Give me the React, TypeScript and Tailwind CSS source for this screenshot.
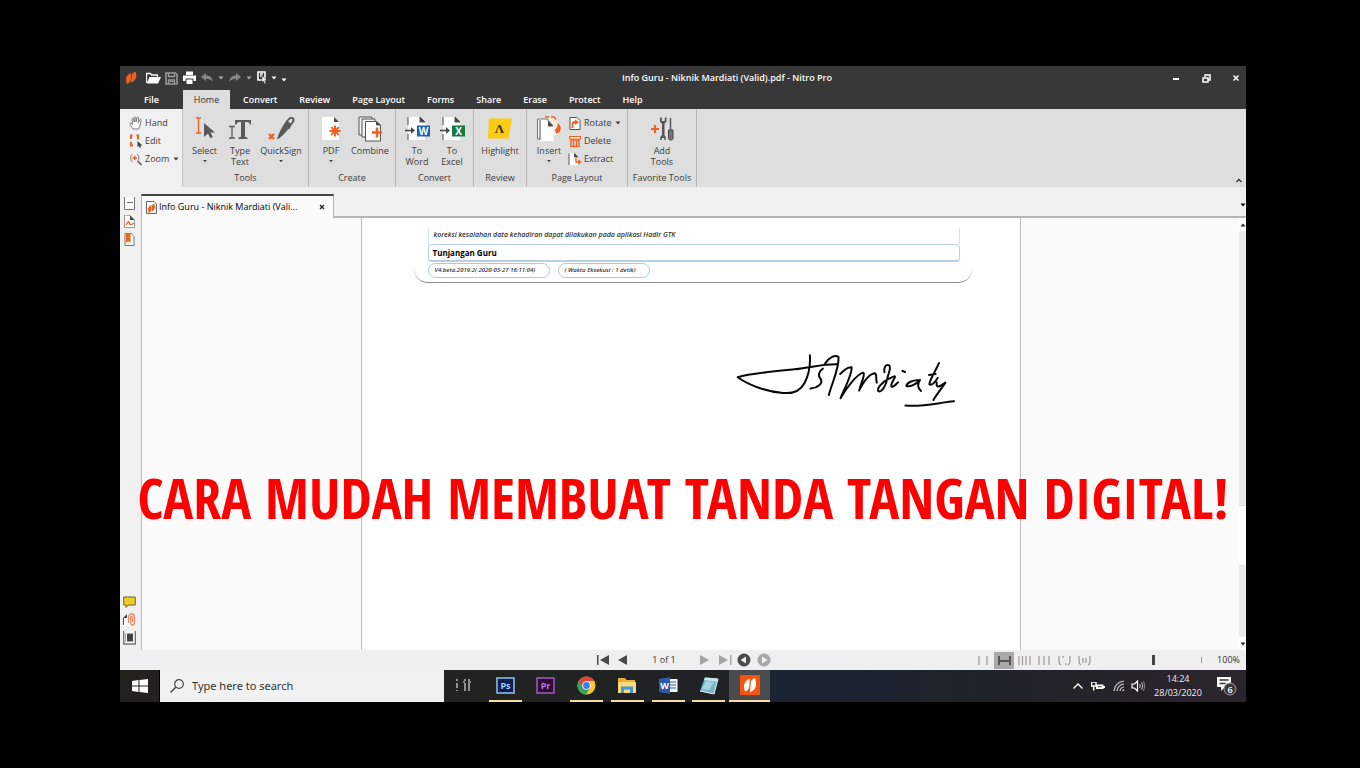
import type { ReactNode } from "react";

type Kids = { children?: ReactNode };

const ORANGE = "#ee6020";
const INK = "#4a4a4a";

function Caret({ className = "" }: { className?: string }) {
  return (
    <svg viewBox="0 0 6 4" className={`h-1 w-1.5 shrink-0 ${className}`} fill="currentColor" aria-hidden="true">
      <path d="M0.5 0.5h5L3 3.6z" />
    </svg>
  );
}

function Icon({ box, className, children }: Kids & { box: string; className: string }) {
  return (
    <svg viewBox={box} className={`shrink-0 ${className}`} fill="none" aria-hidden="true">
      {children}
    </svg>
  );
}

function NitroMark({ className, fill }: { className: string; fill: string }) {
  return (
    <Icon box="0 0 12 14" className={className}>
      <path d="M6.300 2C3 3.200 1 5.400 1 8.200c0 1.600.3 3.200.9 4.800 2.300-.8 3.600-2.200 3.800-4.400z" fill={fill} />
      <path d="M5.800 11.800C9.300 10.300 11.300 8 11.300 5c0-1.600-.2-3-.6-4.300C8.200 1.200 6.900 2.500 6.700 5z" fill={fill} />
    </Icon>
  );
}

function TitleBar() {
  return (
    <header className="flex h-6 shrink-0 items-center bg-[#383838] text-white">
      <div className="flex w-[168px] shrink-0 items-center pl-[5px]">
        <NitroMark className="h-[14px] w-3" fill={ORANGE} />
        <button aria-label="Open" className="ml-[9px]">
          <Icon box="0 0 15 12" className="h-3 w-[15px]">
            <path d="M0.500 11V1.500h4l1 1.500h6V5" stroke="#fff" strokeWidth="1.300" />
            <path d="M3.500 5H15l-3 6.500H0.800z" fill="#fff" />
          </Icon>
        </button>
        <button aria-label="Save" className="ml-1">
          <Icon box="0 0 13 13" className="h-[13px] w-[13px]">
            <path d="M1 1h9.500L12 2.500V12H1z" stroke="#9b9b9b" strokeWidth="1.500" />
            <path d="M3.500 1.500v3h6v-3M3.500 12V8h6v4" stroke="#9b9b9b" strokeWidth="1.300" />
            <path d="M4.500 9.500h4" stroke="#9b9b9b" />
          </Icon>
        </button>
        <button aria-label="Print" className="ml-[5px]">
          <Icon box="0 0 13 14" className="h-[14px] w-[13px]">
            <path d="M3 0.500h7V4H3zM0 4.500h13V10H0z" fill="#fff" />
            <path d="M3 8h7v5.500H3z" fill="#fff" stroke="#383838" />
          </Icon>
        </button>
        <button aria-label="Undo" className="ml-[5px]">
          <Icon box="0 0 12 10" className="h-2.5 w-3">
            <path d="M5 0v2.500c4 0 6.500 2 6.500 6.500C10 6.500 8 5.800 5 5.800V8L0 4z" fill="#858585" />
          </Icon>
        </button>
        <Caret className="ml-[5px] text-[#aaa]" />
        <button aria-label="Redo" className="ml-[5px]">
          <Icon box="0 0 12 10" className="h-2.5 w-3">
            <path d="M7 0v2.500C3 2.500.500 4.500.500 9 2 6.500 4 5.800 7 5.800V8l5-4z" fill="#858585" />
          </Icon>
        </button>
        <Caret className="ml-[5px] text-[#aaa]" />
        <button aria-label="Selection tool" className="ml-[5px]">
          <Icon box="0 0 11 14" className="h-[14px] w-[11px]">
            <path d="M1 1h7v8H1zM3 3h3M3 5h2" stroke="#fff" strokeWidth="1.600" />
            <path d="M5 4.500l5 5H7.800l1.200 3-1.400.6-1.200-3L5 11.500z" fill="#fff" stroke="#222" strokeWidth=".5" />
          </Icon>
        </button>
        <Caret className="ml-[3px]" />
        <Caret className="ml-1 mt-1" />
      </div>
      <h1 className="min-w-0 flex-1 truncate text-center text-[9px] font-semibold leading-3">
        Info Guru - Niknik Mardiati (Valid).pdf - Nitro Pro
      </h1>
      <div className="flex shrink-0 gap-2.5">
        <button aria-label="Minimise" className="grid h-5 w-5 place-items-center">
          <Icon box="0 0 8 8" className="h-2 w-2"><path d="M1 5h6" stroke="#fff" strokeWidth="2" /></Icon>
        </button>
        <button aria-label="Restore" className="grid h-5 w-5 place-items-center">
          <Icon box="0 0 9 9" className="h-[9px] w-[9px]">
            <path d="M3 3V1h5v5H6M1 4h5v4H1z" stroke="#fff" strokeWidth="1.500" />
          </Icon>
        </button>
        <button aria-label="Close" className="grid h-5 w-5 place-items-center">
          <Icon box="0 0 8 8" className="h-2 w-2"><path d="M1.500 1.500l5 5M6.500 1.500l-5 5" stroke="#fff" strokeWidth="1.500" /></Icon>
        </button>
      </div>
    </header>
  );
}

const menus = ["Convert", "Review", "Page Layout", "Forms", "Share", "Erase", "Protect", "Help"];

function MenuBar() {
  return (
    <nav className="flex h-[19px] shrink-0 bg-[#383838] text-[9px] font-semibold leading-5 text-white">
      <button className="w-[63px]">File</button>
      <button className="w-[47px] bg-[#dedede] font-normal text-[#333]">Home</button>
      <div className="flex px-0.5">
        {menus.map((m) => (
          <button key={m} className="px-[11px]">{m}</button>
        ))}
      </div>
    </nav>
  );
}

function Group({ name, width, children }: Kids & { name: string; width: string }) {
  return (
    <section aria-label={name} className={`flex shrink-0 flex-col border-r border-[#b4b4b4] ${width}`}>
      <div className="flex flex-1 justify-center pt-1.5">{children}</div>
      <p className="whitespace-nowrap pb-[3px] text-center leading-3">{name}</p>
    </section>
  );
}

function Tool({ lines, icon, width, caret }: { lines: string[]; icon: ReactNode; width: string; caret?: boolean }) {
  return (
    <button className={`flex shrink-0 flex-col items-center leading-[11px] ${width}`}>
      <span className="mb-[3px] grid h-[27px] place-items-center">{icon}</span>
      {lines.map((l) => (
        <span key={l} className="whitespace-nowrap">{l}</span>
      ))}
      {caret && <Caret className="mt-[3px] scale-75" />}
    </button>
  );
}

function SmallTool({ icon, label, caret }: { icon: ReactNode; label: string; caret?: boolean }) {
  return (
    <button className="flex h-[18px] items-center gap-0.5">
      <span className="grid w-[15px] place-items-center">{icon}</span>
      <span>{label}</span>
      {caret && <Caret className="ml-0.5" />}
    </button>
  );
}

const pagePath = "M1 1h12l5 5v18H1z";

const SelectIcon = (
  <Icon box="0 0 20 24" className="h-6 w-5">
    <path d="M1 1h5M3.500 1v15M1 16h5" stroke={ORANGE} strokeWidth="1.300" />
    <path d="M9 6l11 9.500h-4.500l2.300 4.500-2.500 1.200-2.300-4.700L9 20z" fill="#595959" />
  </Icon>
);
const TypeIcon = (
  <Icon box="0 0 22 24" className="h-6 w-[22px]">
    <path d="M6 3h16v4.500h-1.200C20.500 5.500 19.500 5 16 5v14c0 1 .5 1.300 2.500 1.500V22h-9v-1.500c2-.2 2.500-.5 2.500-1.500V5C9 5 8 5.500 7.500 7.500H6z" fill="#595959" />
    <path d="M0 9.500h6M3 9.500V21M0 21h6" stroke="#595959" strokeWidth="1.300" />
  </Icon>
);
const SignIcon = (
  <Icon box="0 0 28 24" className="h-6 w-7">
    <path d="M2 17l5 5M7 17l-5 5" stroke={ORANGE} strokeWidth="2.300" />
    <path d="M10 22.500c1-5 4.500-12 9.500-19l5 3.500C20.500 14 15 20 10 22.500z" fill="#595959" />
    <path d="M20 4.500c2-3.500 4.500-4.500 6-3s.5 3-2 6M24 7l-2.500 5" stroke="#595959" strokeWidth="1.800" />
  </Icon>
);
const PdfIcon = (
  <Icon box="0 0 21 25" className="h-[25px] w-[21px]">
    <path d={pagePath} fill="#fff" />
    <path d="M13 1l5 5h-5z" fill={INK} />
    <path d="M14 9.500v11M8.500 15h11M10.200 11.200l7.600 7.600M17.800 11.200l-7.600 7.600" stroke={ORANGE} strokeWidth="1.900" />
  </Icon>
);
const CombineIcon = (
  <Icon box="0 0 25 26" className="h-[26px] w-[25px]">
    <path d="M1 1h13v18H1z" fill="#f2f2f2" stroke="#555" />
    <path d="M4 3h13v18H4z" fill="#f2f2f2" stroke="#555" />
    <path d="M7.500 5.500h11L22.500 9v16h-15z" fill="#fff" stroke="#555" />
    <path d="M18.500 5.500V9h4" fill={INK} stroke={INK} />
    <path d="M19 11.500v10M14 16.500h10" stroke={ORANGE} strokeWidth="2.600" />
  </Icon>
);

function ExportIcon({ letter, fill }: { letter: string; fill: string }) {
  return (
    <Icon box="0 0 25 25" className="h-[25px] w-[25px]">
      <path d="M3 1h12l5 5v18H3z" fill="#fff" />
      <path d="M3 1v8M3 18v6M15 1l5 5h-5z" stroke={INK} fill={INK} />
      <path d="M0 14.500h7" stroke={INK} strokeWidth="1.600" />
      <path d="M6 11l4 3.500L6 18z" fill={INK} />
      <path d="M12 9.500h13v11H12z" fill={fill} />
      <text x="18.500" y="18.500" textAnchor="middle" fontSize="10" fontWeight="700" fill="#fff">{letter}</text>
    </Icon>
  );
}

const HighlightIcon = (
  <Icon box="0 0 24 21" className="h-[21px] w-6">
    <path d="M1 0.500h23l-3.500 20H0z" fill="#fccc12" />
    <text x="11.500" y="15" textAnchor="middle" fontSize="13" fontFamily="Liberation Serif, serif" fontWeight="700" fill="#3a3000">Λ</text>
  </Icon>
);
const InsertIcon = (
  <Icon box="0 0 26 26" className="h-[26px] w-[26px]">
    <path d="M9 1h9l4 4v14H9z" fill="#f7e8dd" />
    <path d="M9 1h4M15 1h3l2 2.500" stroke={ORANGE} strokeWidth="1.600" />
    <path d="M1.500 3H12v20H1.500z" fill="#fff" stroke="#777" />
    <path d="M4 5h9l4.500 4.500V25H4z" fill="#fff" />
    <path d="M4 4v20M12.500 5v5H17z" fill={INK} stroke={INK} />
    <path d="M22 7l3 4.500-1 4-3.500 2.500-1.500-4 2-2.500z" fill={ORANGE} />
  </Icon>
);
const AddToolsIcon = (
  <Icon box="0 0 23 26" className="h-[26px] w-[23px]">
    <path d="M4 9v8M0 13h8" stroke={ORANGE} strokeWidth="2.200" />
    <path d="M9 1.500v4.200l2 2V19l-1.800 2v3h1.500v-2h2.600v2h1.500v-3L13.500 19V7.700l2-2V1.500h-1.700V5h-3V1.500z" fill="#555" />
    <path d="M19.500 2v12" stroke="#555" strokeWidth="1.500" />
    <path d="M17.500 14h4.500v8.500c0 2-4.500 2-4.500 0z" fill="#777" stroke="#444" />
  </Icon>
);

function Ribbon() {
  return (
    <div className="flex h-[78px] shrink-0 bg-[#dedede] text-[9px] text-[#3c3c3c]">
      <div className="flex w-[63px] shrink-0 flex-col border-r border-[#c4c4c4] bg-[#f0f0f0] pl-2 pt-[5px]">
        <SmallTool label="Hand" icon={
          <Icon box="0 0 14 14" className="h-3.5 w-3.5">
            <path d="M4 13C2.500 10.500 1 9 1 7.500c.8-.9 1.600-.2 2.500 1L3 3.200C3 2 4.500 2 4.700 3.200L5.200 6 5.300 1.700c.1-1.200 1.600-1.200 1.700 0V6L8 2c.2-1.200 1.700-1 1.600.300L9.300 6.500l1.500-2.800c.7-.9 1.900-.2 1.500.8C11 7.500 11.500 10.500 9.500 13z" fill="#fff" stroke="#777" />
          </Icon>} />
        <SmallTool label="Edit" icon={
          <Icon box="0 0 14 14" className="h-3.5 w-3.5">
            <path d="M1 1.500h2.500M2 1.500v3.500M2 8v3.500M1 11.500h3M7.500 1.500H10M9 1.500v4" stroke={ORANGE} strokeWidth="2" />
            <path d="M8.500 7l5 4.500h-2.200l1 2H10.500l-.7-1.500-1.300 1z" fill="#444" />
          </Icon>} />
        <SmallTool label="Zoom" caret icon={
          <Icon box="0 0 14 14" className="h-3.5 w-3.5">
            <path d="M3.500 2C1 4 1 8 3.500 10M8 2c2.500 2 2.500 6 0 8" stroke="#777" />
            <path d="M9 9.500l3.500 3.500" stroke="#555" strokeWidth="1.600" />
            <path d="M5.700 3.800v4.400M3.500 6h4.400" stroke={ORANGE} strokeWidth="1.400" />
          </Icon>} />
      </div>
      <div className="flex min-w-0 flex-1">
        <Group name="Tools" width="w-[126px]">
          <Tool width="w-[36px]" lines={["Select"]} icon={SelectIcon} caret />
          <Tool width="w-[35px]" lines={["Type", "Text"]} icon={TypeIcon} />
          <Tool width="w-[47px]" lines={["QuickSign"]} icon={SignIcon} caret />
        </Group>
        <Group name="Create" width="w-[87px]">
          <Tool width="w-[36px]" lines={["PDF"]} icon={PdfIcon} caret />
          <Tool width="w-[42px]" lines={["Combine"]} icon={CombineIcon} />
        </Group>
        <Group name="Convert" width="w-[78px]">
          <Tool width="w-[35px]" lines={["To", "Word"]} icon={<ExportIcon letter="W" fill="#1d5fb0" />} />
          <Tool width="w-[35px]" lines={["To", "Excel"]} icon={<ExportIcon letter="X" fill="#157a48" />} />
        </Group>
        <Group name="Review" width="w-[53px]">
          <Tool width="w-[46px]" lines={["Highlight"]} icon={HighlightIcon} />
        </Group>
        <Group name="Page Layout" width="w-[101px]">
          <Tool width="w-[36px]" lines={["Insert"]} icon={InsertIcon} caret />
          <div className="-mt-px flex w-[56px] flex-col">
            <SmallTool label="Rotate" caret icon={
              <Icon box="0 0 12 13" className="h-[13px] w-3">
                <path d="M1 12.500V.500h7l3 3v9z" fill="#fff" stroke="#555" />
                <path d="M3.500 11V7.500c0-2 1-2.500 3-2.500" stroke={ORANGE} strokeWidth="1.800" />
                <path d="M6 2.500l4 2.700L6 8z" fill={ORANGE} />
              </Icon>} />
            <SmallTool label="Delete" icon={
              <Icon box="0 0 12 12" className="h-3 w-3">
                <path d="M.500 1.500h11v2.500H.500z" fill="#fff" stroke={ORANGE} strokeWidth="1.200" />
                <path d="M2 5h8v6.500H2zM4.500 6v5M7.500 6v5" stroke={ORANGE} strokeWidth="1.400" />
              </Icon>} />
            <SmallTool label="Extract" icon={
              <Icon box="0 0 14 12" className="h-3 w-3.5">
                <path d="M1 .500h6l3 3V12H1z" fill="#fff" />
                <path d="M1 .500V12M6.500 .500V4H10z" fill="#444" stroke="#555" />
                <path d="M8 5v4h4M10.500 7l2 2-2 2" stroke={ORANGE} strokeWidth="1.400" />
              </Icon>} />
          </div>
        </Group>
        <Group name="Favorite Tools" width="w-[69px]">
          <Tool width="w-[40px]" lines={["Add", "Tools"]} icon={AddToolsIcon} />
        </Group>
        <button aria-label="Collapse ribbon" className="ml-auto mr-1 self-end pb-1">
          <Icon box="0 0 6 5" className="h-[5px] w-1.5"><path d="M.500 4L3 1.500 5.500 4" stroke="#333" strokeWidth="1.300" /></Icon>
        </button>
      </div>
    </div>
  );
}

function SideRail() {
  return (
    <aside className="flex w-[21px] shrink-0 flex-col items-center gap-[5px] bg-[#f0f0f0] pb-[5px] pr-[3px] pt-2.5">
      <button aria-label="Pages">
        <Icon box="0 0 11 13" className="h-[13px] w-[11px]">
          <path d="M.500 0v12.500h10V0" fill="#fff" stroke="#777" /><path d="M3 5.500h6" stroke="#666" />
        </Icon>
      </button>
      <button aria-label="Signatures">
        <Icon box="0 0 11 13" className="h-[13px] w-[11px]">
          <path d="M.500 0v12.500h10V5L6 .500z" fill="#fff" stroke="#999" />
          <path d="M6 .500V5h4.500z" fill="#444" /><path d="M2 10c2-4 3-4 3.500-1.500S8 9 10 8" stroke={ORANGE} strokeWidth="1.300" />
        </Icon>
      </button>
      <button aria-label="Bookmarks">
        <Icon box="0 0 11 13" className="h-[13px] w-[11px]">
          <path d="M1 .500h6.500l2.500 3v9H1z" fill="#fff" stroke="#777" /><path d="M2 0h4.500v10L4.200 8 2 10z" fill="#ec6a10" />
        </Icon>
      </button>
      <button aria-label="Comments" className="mt-auto">
        <Icon box="0 0 13 12" className="h-3 w-[13px]">
          <path d="M.700 1h11.600v8H5l-2 2.500V9H.700z" fill="#f0cb28" stroke="#776522" />
        </Icon>
      </button>
      <button aria-label="Attachments">
        <Icon box="0 0 14 13" className="h-[13px] w-3.5">
          <path d="M1 13V5l4-4h3v12z" fill="#fff" /><path d="M1 12V5l4-4v4H2v7z" fill="#444" />
          <path d="M6.500 10V4c0-4 6-4 6 0v5c0 4-4 4-4 0V4.500c0-1.500 2-1.500 2 0V9" stroke="#e88c68" strokeWidth="1.300" />
        </Icon>
      </button>
      <button aria-label="Layers">
        <Icon box="0 0 13 14" className="h-3.5 w-[13px]">
          <path d="M.700 0v13h11.600V0" fill="#fff" stroke="#777" strokeWidth="1.400" /><path d="M4 2.500h6v8H4z" fill="#444" /><path d="M2.500 2v9" stroke="#aaa" />
        </Icon>
      </button>
    </aside>
  );
}

function Signature() {
  return (
    <svg viewBox="40 400 670 170" className="ml-auto mr-[63px] mt-[70px] w-[223px]" fill="none" stroke="#080808" strokeWidth="6" strokeLinecap="round" strokeLinejoin="round" role="img" aria-label="Signature">
      <path d="M349 434C308 433 276 443 222 449C150 456 92 461 51 473C88 499 142 517 187 520C218 523 241 511 252 490C265 465 270 439 268 407" />
      <path d="M307 447C295 455 291 468 300 477C309 492 291 505 270 507" />
      <path d="M314 431C327 412 344 405 354 412C356 447 335 488 325 526" />
      <path d="M359 463C371 451 384 441 393 443C397 460 372 507 360 536C379 502 411 462 429 459C435 466 421 491 416 513C426 493 445 463 463 461C471 463 465 478 469 489" />
      <path d="M492 458C489 444 496 433 506 437C514 445 503 462 501 475C498 495 485 518 475 515C465 509 488 485 506 477C521 470 527 466 522 476C515 488 509 499 515 502C521 502 526 494 533 488M546 454L554 457" />
      <path d="M595 482C578 480 559 490 558 499C569 503 586 495 599 481C592 491 590 503 602 514" />
      <path d="M656 430C647 453 629 476 627 494C634 500 646 485 652 475M626 466L646 463M649 489C647 508 658 501 675 489C665 505 651 522 639 541" />
      <path d="M555 558C611 563 653 549 701 545" />
    </svg>
  );
}

function Document() {
  return (
    <article className="w-[660px] shrink-0 border-x border-[#bebebe] bg-white pt-2.5 text-[#333]">
      <div className="ml-[52px] w-[558px] rounded-b-[14px] border-b border-[#8a8a8a] pb-1 pl-[14px] pr-3">
        <p className="h-4 border-x border-[#cfe0ea] px-[5px] text-[7px] font-semibold italic leading-[14px]">
          koreksi kesalahan data kehadiran dapat dilakukan pada aplikasi Hadir GTK
        </p>
        <h2 className="h-[18px] rounded-sm border border-b-2 border-[#b7d0e0] px-1 text-[8px] font-bold leading-[15px] text-black">Tunjangan Guru</h2>
        <div className="flex gap-2 pt-px text-[6px] font-semibold italic">
          <span className="h-[15px] w-[122px] whitespace-nowrap rounded-full border border-[#a9ccda] px-1.5 leading-[13px]">V4.beta.2019.2( 2020-03-27 16:11:04)</span>
          <span className="h-[15px] w-[92px] whitespace-nowrap rounded-full border border-[#a9ccda] px-1.5 leading-[13px]">( Waktu Eksekusi : 1 detik)</span>
        </div>
      </div>
      <Signature />
    </article>
  );
}

function Workspace() {
  return (
    <div className="flex min-h-0 flex-1">
      <SideRail />
      <div className="flex min-w-0 flex-1 flex-col">
        <div className="flex h-[31px] shrink-0 items-end bg-[#f0f0f0]">
          <div className="flex h-6 w-[193px] shrink-0 items-center border-x border-t-2 border-x-[#b4b4b4] border-t-[#444] bg-[#fafafa] pl-1 text-[9px] font-medium text-black">
            <Icon box="0 0 11 13" className="h-[13px] w-[11px]">
              <path d="M.500.500H8L10.500 3v9.500H.500z" fill="#fff" stroke="#666" />
              <path d="M5.500 4C3 5 2 6.500 2 8.500L2.500 12C4.300 11.500 5 10.500 5.200 9zM5.500 10.500C8 9.500 9 8 9 6l-.5-3.500C6.600 3 6 4 5.800 6z" fill={ORANGE} />
            </Icon>
            <span className="ml-0.5 flex-1 truncate">Info Guru - Niknik Mardiati (Vali...</span>
            <button aria-label="Close document" className="mr-2 grid place-items-center">
              <Icon box="0 0 6 6" className="h-1.5 w-1.5"><path d="M1 1l4 4M5 1L1 5" stroke="#222" strokeWidth="1.300" /></Icon>
            </button>
          </div>
          <div className="flex h-full flex-1 items-center justify-end border-b-2 border-[#b4b4b4] pt-1.5">
            <Caret className="text-black" />
          </div>
        </div>
        <div className="flex min-h-0 flex-1">
          <div className="flex min-w-0 flex-1 justify-center border-l border-[#b9b9b9] bg-[#fafafa]">
            <Document />
          </div>
          <div className="flex w-[7px] shrink-0 flex-col bg-[#ebebeb]">
            <span className="grid h-[13px] place-items-center bg-white"><Caret className="rotate-180 text-[#222]" /></span>
            <span className="flex-[274]" />
            <span className="h-[61px] border-y border-[#ddd] bg-white" />
            <span className="flex-[71]" />
            <span className="grid h-[13px] place-items-center bg-white"><Caret className="text-[#222]" /></span>
          </div>
        </div>
      </div>
    </div>
  );
}

function NavButton({ label, d, fill, className = "" }: { label: string; d: string; fill: string; className?: string }) {
  return (
    <button aria-label={label} className={className}>
      <Icon box="0 0 14 14" className="h-3.5 w-3.5">
        <path d={d} fill={fill} fillRule="evenodd" />
      </Icon>
    </button>
  );
}

const viewModes = [
  { label: "Single page", d: "M1 1v9M9 1v9" },
  { label: "Fit width", d: "M3 1v9M14 1v9M3 6h11" },
  { label: "Facing pages", d: "M1 1v9M4.500 1v9M8 1v9M12 1v9" },
  { label: "Continuous facing", d: "M1 1v9M6 1v9M11 1v9" },
  { label: "Rotate left", d: "M1 1v5q0 3 2 4M5 1v2M8 8v2M12 1v5q0 3-2 4" },
  { label: "Rotate right", d: "M1 1v5q0 3 2 4M5 3v5M8 3v5M12 1v5q0 3-2 4" },
];

function StatusBar() {
  return (
    <footer className="flex h-5 shrink-0 items-center bg-[#efefef] text-[9px] text-[#333]">
      <div className="flex flex-1 items-center pl-[476px]">
        <NavButton label="First page" fill={INK} d="M1 2h1.500v10H1zM13 2v10L4 7z" />
        <NavButton label="Previous page" fill={INK} className="ml-[5px]" d="M12 2v10L3 7z" />
        <span className="w-[70px] text-center">1 of 1</span>
        <NavButton label="Next page" fill="#a3a3a3" className="mr-[5px]" d="M1 2v10l9-5z" />
        <NavButton label="Last page" fill="#a3a3a3" className="mr-[5px]" d="M1 2v10l9-5zM12 2h1.500v10H12z" />
        <NavButton label="Back" fill="#4a4a4a" className="mr-[6px]" d="M7 .500a6.500 6.500 0 1 0 0 13a6.500 6.500 0 1 0 0-13zM9 3.500v7L3.500 7z" />
        <NavButton label="Forward" fill="#a8a8a8" d="M7 .500a6.500 6.500 0 1 0 0 13a6.500 6.500 0 1 0 0-13zM5 3.500v7L10.500 7z" />
      </div>
      <div className="flex items-center">
        {viewModes.map((v, i) => (
          <button key={v.label} aria-label={v.label} className={i === 1 ? "grid h-[17px] w-5 place-items-center bg-[#a9a9a9]" : "grid h-[17px] w-5 place-items-center"}>
            <Icon box={i === 1 ? "0 0 17 11" : "0 0 13 11"} className={i === 1 ? "h-[11px] w-[17px]" : "h-[11px] w-[13px]"}>
              <path d={v.d} stroke={i === 1 ? "#555" : "#999"} strokeWidth={i === 1 ? 2 : 1.2} />
            </Icon>
          </button>
        ))}
      </div>
      <input
        type="range"
        aria-label="Zoom level"
        defaultValue={50}
        className="ml-[9px] h-3 w-[100px] appearance-none bg-transparent [&::-webkit-slider-thumb]:h-2.5 [&::-webkit-slider-thumb]:w-[3px] [&::-webkit-slider-thumb]:appearance-none [&::-webkit-slider-thumb]:bg-[#444]"
      />
      <span className="ml-[-2px] h-1.5 w-px bg-[#999]" />
      <output className="w-11 pr-1.5 text-right">100%</output>
    </footer>
  );
}

function AppTile({ fill, edge, text, label }: { fill: string; edge: string; text: string; label: string }) {
  return (
    <Icon box="0 0 19 17" className="h-[17px] w-[19px]">
      <path d="M1 1h17v15H1z" fill={fill} stroke={edge} strokeWidth="1.500" />
      <text x="9.500" y="12" textAnchor="middle" fontSize="9" fontWeight="700" fill={text}>{label}</text>
    </Icon>
  );
}

const apps: { name: string; open: boolean; icon: ReactNode }[] = [
  { name: "Task view", open: false, icon: (
    <Icon box="0 0 16 14" className="h-3.5 w-4">
      <path d="M1 1v2M1 5v5M1 12v1M9 1v2M9 5v8M13 1v2M13 5v8M7 4h2M12 4h3" stroke="#ddd" strokeWidth="1.200" />
    </Icon>) },
  { name: "Photoshop", open: true, icon: <AppTile fill="#101d4e" edge="#8fc4f3" text="#a5d3fa" label="Ps" /> },
  { name: "Premiere", open: false, icon: <AppTile fill="#2b0d38" edge="#a65bb8" text="#c377d4" label="Pr" /> },
  { name: "Chrome", open: true, icon: (
    <Icon box="0 0 20 20" className="h-[19px] w-[19px]">
      <circle cx="10" cy="10" r="9.500" fill="#f5c631" />
      <path d="M10 10L1.800 5.250A9.500 9.500 0 0 0 9.500 19.500L14 12z" fill="#39a354" />
      <path d="M1.800 5.250A9.500 9.500 0 0 1 18.230 5.300H10V10H4.500z" fill="#e0453a" />
      <circle cx="10" cy="10" r="4.600" fill="#fff" /><circle cx="10" cy="10" r="3.600" fill="#3d7be8" />
    </Icon>) },
  { name: "File Explorer", open: true, icon: (
    <Icon box="0 0 20 17" className="h-[17px] w-5">
      <path d="M1 1h7l1.500 2H18v13H1z" fill="#e9ae32" /><path d="M1 5h18v11H1z" fill="#fbd976" />
      <path d="M4 16V9.500h12V16h-3v-3.500H7V16z" fill="#3e9bd2" />
    </Icon>) },
  { name: "Word", open: true, icon: (
    <Icon box="0 0 20 17" className="h-[17px] w-5">
      <path d="M10 2h9.500v13H10z" fill="#f5f8ff" /><path d="M12 5h6M12 8h6M12 11h6" stroke="#2b579a" />
      <path d="M1 2l11-2v17L1 15z" fill="#2a5caa" />
      <text x="6.500" y="12" textAnchor="middle" fontSize="9" fontWeight="700" fill="#fff">W</text>
    </Icon>) },
  { name: "Notepad", open: true, icon: (
    <Icon box="0 0 20 19" className="h-[19px] w-5">
      <path d="M6 1.500l13 1-4 15.500-14-3z" fill="#78b5c5" /><path d="M6 1.500l13 1-1 3-13-1.500z" fill="#c9e8ee" />
      <path d="M7 5l8 1-5 8-7-1z" fill="#a6d5df" /><path d="M1 15l14 3 4-15" stroke="#e8f4f6" />
    </Icon>) },
  { name: "Nitro Pro", open: true, icon: (
    <Icon box="0 0 20 20" className="h-5 w-5">
      <path d="M0 0h20v20H0z" fill="#f7520e" />
      <path d="M9.800 3.500C5.800 5.500 4 8 4 11c0 2 .3 3.800 1 5.500 2.800-1 4.200-2.800 4.300-5.300zM10 17.500c4.200-2 6-4.700 6-8 0-2.500-.3-4.500-1-6.500-3 1-4.300 2.700-4.300 5.500z" fill="#fff" />
    </Icon>) },
];

function Taskbar() {
  return (
    <div className="flex h-8 shrink-0 bg-linear-to-r from-[#25241c] via-[#1f2126] via-65% to-[#2b232c] text-[#eee]">
      <button aria-label="Start" className="grid w-[39px] shrink-0 place-items-center bg-[#22211e]">
        <Icon box="0 0 16 14" className="h-3.5 w-4">
          <path d="M0 2l6.500-1v5.500H0zM7.500.900L16 0v6.500H7.500zM0 7.500h6.500V13L0 12zM7.500 7.500H16V14l-8.500-1z" fill="#fff" />
        </Icon>
      </button>
      <label className="flex w-[285px] shrink-0 items-center gap-2 border-l border-black bg-[#f1f1f1] pl-2.5">
        <Icon box="0 0 14 14" className="h-3.5 w-3.5">
          <circle cx="9" cy="5" r="4.300" stroke="#444" strokeWidth="1.200" /><path d="M6 8l-5.500 5.500" stroke="#444" strokeWidth="1.400" />
        </Icon>
        <input aria-label="Search" placeholder="Type here to search" className="min-w-0 flex-1 bg-transparent font-['Noto_Sans',sans-serif] text-[11px] outline-none placeholder:text-[#333]" />
      </label>
      <div className="grid w-[326px] shrink-0 grid-cols-8">
        {apps.map((a) => (
          <button key={a.name} aria-label={a.name} className={a.name === "Nitro Pro" ? "flex flex-col items-center bg-[#4a4b4f]" : "flex flex-col items-center"}>
            <span className="grid flex-1 place-items-center">{a.icon}</span>
            <span className={a.name === "Nitro Pro" ? "h-0.5 w-full bg-[#f5df9c]" : a.open ? "h-0.5 w-[33px] bg-[#f5df9c]" : "h-0.5"} />
          </button>
        ))}
      </div>
      <div className="flex flex-1 items-center justify-end bg-linear-to-r from-[#1b2433] via-[#20232a] to-[#2c242d] pr-2">
        <Icon box="0 0 10 6" className="h-1.5 w-2.5"><path d="M.500 5.500L5 1l4.500 4.500" stroke="#fff" strokeWidth="1.300" /></Icon>
        <Icon box="0 0 14 9" className="ml-2 h-[9px] w-3.5">
          <path d="M.500 0h4.500v4H.500z" stroke="#fff" strokeWidth="1.400" /><path d="M5 2.500h7.500V7H5zM12.500 4H14v2h-1.500z" fill="#fff" /><path d="M2.700 4v4.500" stroke="#fff" strokeWidth="1.500" /><path d="M7 4.700h3.500" stroke="#333" />
        </Icon>
        <Icon box="0 0 12 12" className="ml-2 h-3 w-3">
          <path d="M1 11C1.500 5.500 5 2 11 1M4 11c.5-4 3-6.500 7-7M7 11c.3-2.200 1.500-3.700 4-4M9.500 11l1.500-1.500" stroke="#ccc" strokeWidth="1.200" />
        </Icon>
        <Icon box="0 0 14 12" className="ml-1.5 h-3 w-3.5">
          <path d="M1 4h2.500L6.500 1v10l-3-3H1z" stroke="#fff" strokeWidth="1.200" />
          <path d="M8.500 4q1.500 2 0 4M10.500 2.500q2.500 3.500 0 7" stroke="#ccc" /><path d="M12.500 1q2.500 5 0 10" stroke="#888" />
        </Icon>
        <div className="ml-[7px] w-[52px] text-center text-[9px] leading-[14px]">
          <p>14:24</p>
          <p>28/03/2020</p>
        </div>
        <button aria-label="Notifications, 6 new" className="ml-3">
          <Icon box="0 0 22 20" className="h-5 w-[22px]">
            <path d="M1 1h14v10H9l-4 4v-4H1z" fill="#fff" /><path d="M3.500 4h9M3.500 7.500h6" stroke="#333" strokeWidth="1.300" />
            <circle cx="14" cy="13" r="6" fill="#3a3a3d" stroke="#a0a0a0" />
            <text x="14" y="16.500" textAnchor="middle" fontSize="9" fontWeight="600" fill="#fff">6</text>
          </Icon>
        </button>
      </div>
    </div>
  );
}

export default function App() {
  return (
    <div className="flex min-h-screen bg-black pb-[66px] pl-[120px] pr-[114px] pt-[66px] font-['Open_Sans','Noto_Sans',sans-serif]">
      <main className="relative flex min-w-0 flex-1 flex-col overflow-hidden bg-[#f0f0f0]">
        <TitleBar />
        <MenuBar />
        <Ribbon />
        <Workspace />
        <StatusBar />
        <Taskbar />
        <p className="pointer-events-none absolute inset-x-0 top-[381px] whitespace-nowrap text-center font-['Open_Sans_Condensed','Liberation_Sans_Narrow','Open_Sans',sans-serif] text-[56px] font-bold leading-[100px] text-[#ff0000]">
          CARA MUDAH MEMBUAT TANDA TANGAN DIGITAL!
        </p>
      </main>
    </div>
  );
}
